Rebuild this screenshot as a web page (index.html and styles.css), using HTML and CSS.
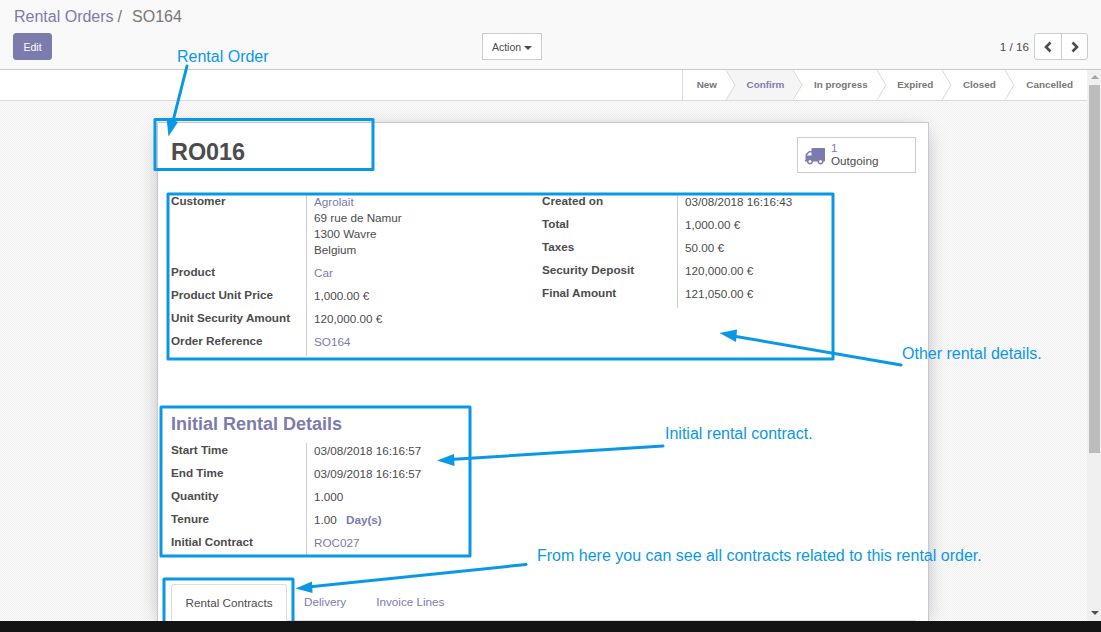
FILE: index.html
```html
<!DOCTYPE html>
<html lang="en">
<head>
    <meta charset="UTF-8">
    <meta name="viewport" content="width=device-width, initial-scale=1.0">
    <title>Rental Orders / SO164</title>
    <link rel="stylesheet" href="styles.css">
</head>
<body>
<div class="page">
    <div class="control-panel">
        <div class="breadcrumb"><a class="link">Rental Orders</a><span class="sep">/</span><span class="current">SO164</span></div>
        <div class="cp-buttons">
            <div class="cp-left"><button class="btn-primary">Edit</button></div>
            <button class="btn-default">Action <span class="caret"></span></button>
            <div class="cp-right">
                <span class="pager-value">1 / 16</span>
                <div class="pager">
                    <button class="pager-btn"><svg width="10" height="12" viewBox="0 0 10 12"><polyline points="7.5,1.5 3,6 7.500,10.500" fill="none" stroke="#4c4c4c" stroke-width="2.600"/></svg></button>
                    <button class="pager-btn"><svg width="10" height="12" viewBox="0 0 10 12"><polyline points="2.500,1.500 7,6 2.500,10.500" fill="none" stroke="#4c4c4c" stroke-width="2.600"/></svg></button>
                </div>
            </div>
        </div>
    </div>

    <div class="main">
        <div class="content">
            <div class="statusbar">
                <div class="steps">
                    <div class="step step-first">New<svg class="chevron" width="10" height="30" viewBox="0 0 10 30"><polyline points="0,0 9,15 0,30" fill="#fff" stroke="#d9d9d9"/></svg></div>
                    <div class="step step-active">Confirm<svg class="chevron" width="10" height="30" viewBox="0 0 10 30"><polyline points="0,0 9,15 0,30" fill="#f5f5f5" stroke="#d9d9d9"/></svg></div>
                    <div class="step">In progress<svg class="chevron" width="10" height="30" viewBox="0 0 10 30"><polyline points="0,0 9,15 0,30" fill="#fff" stroke="#d9d9d9"/></svg></div>
                    <div class="step">Expired<svg class="chevron" width="10" height="30" viewBox="0 0 10 30"><polyline points="0,0 9,15 0,30" fill="#fff" stroke="#d9d9d9"/></svg></div>
                    <div class="step">Closed<svg class="chevron" width="10" height="30" viewBox="0 0 10 30"><polyline points="0,0 9,15 0,30" fill="#fff" stroke="#d9d9d9"/></svg></div>
                    <div class="step step-last">Cancelled</div>
                </div>
            </div>

            <div class="sheet-bg">
                <div class="sheet">
                    <div class="sheet-head">
                        <h1>RO016</h1>
                        <div class="stat-btn">
                            <svg class="truck" width="21" height="21" viewBox="0 0 1792 1792"><path fill="#7c7bad" d="M640 1408q0-52-38-90t-90-38-90 38-38 90 38 90 90 38 90-38 38-90zm-384-512h384v-256h-158q-13 0-22 9l-195 195q-9 9-9 22v30zm1280 512q0-52-38-90t-90-38-90 38-38 90 38 90 90 38 90-38 38-90zm256-1088v1024q0 15-4 26.500t-13.500 18.500-16.500 11.500-23.500 6-22.500 2-25.500 0-22.500-.5q0 106-75 181t-181 75-181-75-75-181h-384q0 106-75 181t-181 75-181-75-75-181h-64q-3 0-22.500.5t-25.500 0-22.500-2-23.500-6-16.500-11.500-13.500-18.500-4-26.500q0-26 19-45t45-19v-320q0-8-.5-35t0-38 2.500-34.500 6.500-37 14-30.500 22.500-30l198-198q19-19 50.500-32t58.500-13h160v-192q0-26 19-45t45-19h1024q26 0 45 19t19 45z"/></svg>
                            <div class="stat-text"><span class="stat-num">1</span><span>Outgoing</span></div>
                        </div>
                    </div>

                    <div class="groups">
                        <table class="info info-left">
                            <tr><td class="lbl">Customer</td><td class="val"><a class="link">Agrolait</a><br>69 rue de Namur<br>1300 Wavre<br>Belgium</td></tr>
                            <tr><td class="lbl">Product</td><td class="val"><a class="link">Car</a></td></tr>
                            <tr><td class="lbl">Product Unit Price</td><td class="val">1,000.00 €</td></tr>
                            <tr><td class="lbl">Unit Security Amount</td><td class="val">120,000.00 €</td></tr>
                            <tr><td class="lbl">Order Reference</td><td class="val"><a class="link">SO164</a></td></tr>
                        </table>
                        <table class="info">
                            <tr><td class="lbl">Created on</td><td class="val">03/08/2018 16:16:43</td></tr>
                            <tr><td class="lbl">Total</td><td class="val">1,000.00 €</td></tr>
                            <tr><td class="lbl">Taxes</td><td class="val">50.00 €</td></tr>
                            <tr><td class="lbl">Security Deposit</td><td class="val">120,000.00 €</td></tr>
                            <tr><td class="lbl">Final Amount</td><td class="val">121,050.00 €</td></tr>
                        </table>
                    </div>

                    <h2>Initial Rental Details</h2>
                    <table class="info">
                        <tr><td class="lbl">Start Time</td><td class="val">03/08/2018 16:16:57</td></tr>
                        <tr><td class="lbl">End Time</td><td class="val">03/09/2018 16:16:57</td></tr>
                        <tr><td class="lbl">Quantity</td><td class="val">1.000</td></tr>
                        <tr><td class="lbl">Tenure</td><td class="val">1.00 <b class="unit">Day(s)</b></td></tr>
                        <tr><td class="lbl">Initial Contract</td><td class="val"><a class="link">ROC027</a></td></tr>
                    </table>

                    <div class="tabs">
                        <a class="tab tab-active">Rental Contracts</a>
                        <a class="tab">Delivery</a>
                        <a class="tab">Invoice Lines</a>
                    </div>
                </div>
            </div>
        </div>

        <div class="scrollbar">
            <span class="arrow-up"></span>
            <div class="thumb"></div>
            <span class="arrow-down"></span>
        </div>
    </div>
    <div class="taskbar"></div>

    <!-- screenshot annotations -->
    <svg class="marks" width="1101" height="632" viewBox="0 0 1101 632">
        <g fill="none" stroke="#0a98e6" stroke-width="3" stroke-linejoin="round">
            <rect x="155" y="119.500" width="218" height="50"/>
            <rect x="168" y="194" width="665" height="165"/>
            <rect x="161" y="407" width="309" height="149"/>
            <rect x="164" y="579" width="129" height="50"/>
        </g>
        <g stroke="#0a98e6" stroke-width="3" stroke-linecap="round">
            <line x1="187" y1="66" x2="172" y2="125"/>
            <line x1="901" y1="365" x2="733" y2="336"/>
            <line x1="663" y1="446" x2="450" y2="459.500"/>
            <line x1="526" y1="564.500" x2="308" y2="587"/>
        </g>
        <g fill="#0a98e6">
            <polygon points="168.500,136.500 166.500,118 178,122"/>
            <polygon points="719.500,333 737,329.500 736,342"/>
            <polygon points="437,460.500 454,454 454.500,466"/>
            <polygon points="295.500,588.500 312,581.500 312.500,593"/>
        </g>
    </svg>
    <span class="note note-order">Rental Order</span>
    <span class="note note-other">Other rental details.</span>
    <span class="note note-initial">Initial rental contract.</span>
    <span class="note note-from">From here you can see all contracts related to this rental order.</span>
</div>
</body>
</html>
```

FILE: styles.css
```css
html, body {
    margin: 0;
    padding: 0;
}
body {
    font-family: "Liberation Sans", Arial, sans-serif;
    font-size: 11.7px;
    color: #4c4c4c;
    background-color: #fff;
}
.page {
    position: relative;
    width: 1101px;
    height: 632px;
    overflow: hidden;
    display: flex;
    flex-direction: column;
}
.link {
    color: #7c7bad;
}

/* control panel */
.control-panel {
    height: 69px;
    flex: none;
    box-sizing: content-box;
    background-color: #f9f9f9;
    border-bottom: 1px solid #c8c8c8;
}
.breadcrumb {
    padding: 7px 0 0 14px;
    height: 26px;
    line-height: 20px;
    font-size: 16px;
    color: #777;
}
.sep {
    margin: 0 10px 0 4px;
}
.cp-buttons {
    display: flex;
    align-items: flex-start;
    padding-left: 13px;
    padding-right: 13px;
}
.cp-left {
    width: 469px;
}
.cp-right {
    margin-left: auto;
    display: flex;
    align-items: center;
}
button {
    font-family: "Liberation Sans", Arial, sans-serif;
    cursor: pointer;
}
.btn-primary {
    width: 39px;
    height: 27px;
    border: 1px solid #7c7bad;
    border-radius: 3px;
    background-color: #7c7bad;
    color: #fff;
    font-size: 10.500px;
    padding: 0;
}
.btn-default {
    width: 60px;
    height: 27px;
    border: 1px solid #ccc;
    border-radius: 0;
    background-color: #fff;
    color: #4c4c4c;
    font-size: 10.500px;
    padding: 0;
}
.caret {
    display: inline-block;
    vertical-align: middle;
    border-top: 4px solid #4c4c4c;
    border-left: 4px solid transparent;
    border-right: 4px solid transparent;
}
.pager-value {
    margin-right: 5px;
    font-size: 11.700px;
}
.pager {
    display: flex;
    border: 1px solid #ccc;
    border-radius: 3px;
    background-color: #fff;
}
.pager-btn {
    width: 26px;
    height: 25px;
    padding: 0;
    border: none;
    background: none;
    display: flex;
    align-items: center;
    justify-content: center;
}
.pager-btn + .pager-btn {
    border-left: 1px solid #ccc;
}

/* main area */
.main {
    flex: 1;
    display: flex;
    min-height: 0;
}
.content {
    flex: 1;
    min-width: 0;
    display: flex;
    flex-direction: column;
}
.statusbar {
    height: 30px;
    flex: none;
    display: flex;
    justify-content: flex-end;
    background-color: #fff;
    border-bottom: 1px solid #d9d9d9;
}
.steps {
    display: flex;
    border-left: 1px solid #d9d9d9;
}
.step {
    position: relative;
    padding: 0 9px 0 20.500px;
    line-height: 30px;
    font-size: 9.900px;
    font-weight: bold;
    color: #777;
}
.step-first {
    padding-left: 14px;
}
.step-active {
    background-color: #f5f5f5;
    color: #7c7bad;
}
.step-last {
    padding: 0 14px 0 21.500px;
}
.chevron {
    position: absolute;
    top: 0;
    left: 100%;
    z-index: 1;
}
.sheet-bg {
    flex: 1;
    min-height: 0;
    overflow: hidden;
    background-color: #f7f7f7;
    background-image: repeating-conic-gradient(#f1f1f1 0 25%, #fbfbfb 0 50%);
    background-size: 2px 2px;
}
.sheet {
    width: 745px;
    margin: 21px 0 0 157px;
    padding: 0 12px 0 13px;
    background-color: #fff;
    border: 1px solid #c8c8d4;
    border-bottom: none;
    box-shadow: 0 5px 20px -5px rgba(0, 0, 0, 0.35);
}
.sheet-head {
    height: 71px;
    padding-top: 14px;
    box-sizing: border-box;
    display: flex;
    justify-content: space-between;
    align-items: flex-start;
}
h1 {
    margin: 2px 0 0;
    font-size: 23.400px;
    line-height: 26px;
    color: #4c4c4c;
}
.stat-btn {
    width: 117px;
    height: 34px;
    border: 1px solid #ccc;
    display: flex;
    align-items: center;
}
.truck {
    margin-left: 6px;
}
.stat-text {
    margin: -2px 0 0 6px;
    display: flex;
    flex-direction: column;
    line-height: 13px;
}
.stat-num {
    color: #7c7bad;
}
.groups {
    display: flex;
    align-items: flex-start;
}
.info {
    border-collapse: collapse;
    border-spacing: 0;
}
.info-left {
    width: 371px;
}
.lbl {
    width: 135px;
    padding: 0;
    vertical-align: top;
    line-height: 14px;
    font-weight: bold;
}
.val {
    padding: 0 0 7px 7px;
    vertical-align: top;
    line-height: 16px;
    border-left: 1px solid #ccc;
}
tr:last-child .val {
    padding-bottom: 6px;
}
.unit {
    margin-left: 6px;
    color: #7c7bad;
}
h2 {
    margin: 58px 0 9px;
    font-size: 18px;
    line-height: 20px;
    color: #7c7bad;
}
.tabs {
    display: flex;
    margin-top: 27px;
    height: 36px;
    border-bottom: 1px solid #ddd;
}
.tab {
    box-sizing: border-box;
    height: 37px;
    padding: 0 15px;
    line-height: 35px;
    font-size: 11.700px;
    color: #7c7bad;
}
.tab-active {
    width: 116px;
    margin-right: 2px;
    padding: 0;
    text-align: center;
    color: #4c4c4c;
    border: 1px solid #ddd;
    border-bottom-color: #fff;
    border-radius: 3px 3px 0 0;
    background-color: #fff;
}

/* scrollbar */
.scrollbar {
    position: relative;
    width: 14px;
    flex: none;
    background-color: #f0f0f0;
}
.thumb {
    position: absolute;
    top: 15px;
    left: 2px;
    width: 11px;
    height: 368px;
    background-color: #bcbcbc;
}
.arrow-up, .arrow-down {
    position: absolute;
    left: 4px;
    border-left: 4px solid transparent;
    border-right: 4px solid transparent;
}
.arrow-up {
    top: 5px;
    border-bottom: 4px solid #a3a3a3;
}
.arrow-down {
    bottom: 6px;
    border-top: 4px solid #505050;
}
.taskbar {
    height: 11px;
    flex: none;
    position: relative;
    z-index: 3;
    background-color: #141414;
}

/* annotations drawn over the page */
.marks {
    position: absolute;
    top: 0;
    left: 0;
    z-index: 2;
}
.note {
    position: absolute;
    z-index: 2;
    font-size: 16px;
    line-height: 20px;
    white-space: nowrap;
    color: #0a98e6;
}
.note-order {
    left: 177px;
    top: 47px;
}
.note-other {
    left: 902px;
    top: 344px;
}
.note-initial {
    left: 665px;
    top: 424px;
}
.note-from {
    left: 537px;
    top: 546px;
}
```
